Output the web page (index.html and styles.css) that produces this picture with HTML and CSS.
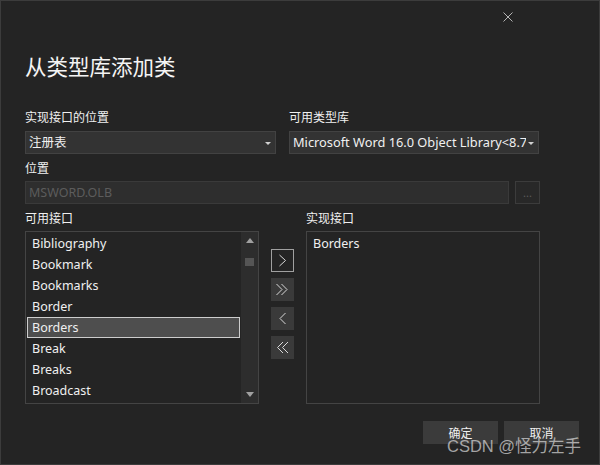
FILE: index.html
```html
<!DOCTYPE html>
<html lang="zh-CN">
<head>
<meta charset="utf-8">
<title>从类型库添加类</title>
<link rel="stylesheet" href="styles.css">
</head>
<body>
<div class="dialog">
  <div class="titlebar">
    <svg class="close" width="10" height="10" viewBox="0 0 10 10"><path d="M0.5 0.5 L9.5 9.5 M9.5 0.5 L0.5 9.5" stroke="#b4b4b4" stroke-width="1" fill="none"/></svg>
  </div>
  <h1 class="title">从类型库添加类</h1>
  <div class="top-grid">
    <div class="field">
      <div class="label">实现接口的位置</div>
      <div class="combo"><span class="combo-text">注册表</span><span class="caret"></span></div>
    </div>
    <div class="field">
      <div class="label">可用类型库</div>
      <div class="combo"><span class="combo-text wide">Microsoft Word 16.0 Object Library&lt;8.7&gt;</span><span class="caret"></span></div>
    </div>
  </div>
  <div class="label label-gap">位置</div>
  <div class="path-row">
    <div class="path-input">MSWORD.OLB</div>
    <div class="browse">...</div>
  </div>
  <div class="lists">
    <div class="list-col">
      <div class="label list-label">可用接口</div>
      <div class="listbox">
        <div class="items">
          <div class="item">Bibliography</div>
          <div class="item">Bookmark</div>
          <div class="item">Bookmarks</div>
          <div class="item">Border</div>
          <div class="item selected">Borders</div>
          <div class="item">Break</div>
          <div class="item">Breaks</div>
          <div class="item">Broadcast</div>
        </div>
        <div class="scrollbar">
          <div class="sb-btn"><span class="tri-up"></span></div>
          <div class="thumb"></div>
          <div class="sb-space"></div>
          <div class="sb-btn"><span class="tri-down"></span></div>
        </div>
      </div>
    </div>
    <div class="move-buttons">
      <div class="move focused"><svg width="21" height="21" viewBox="0 0 21 21"><path d="M7.5 5 L13.5 10.5 L7.5 16" stroke="#d8d8d8" fill="none"/></svg></div>
      <div class="move"><svg width="23" height="23" viewBox="0 0 23 23"><path d="M5.5 6 L11 11.5 L5.5 17 M10.5 6 L16 11.5 L10.5 17" stroke="#d8d8d8" fill="none"/></svg></div>
      <div class="move"><svg width="23" height="23" viewBox="0 0 23 23"><path d="M14.5 6 L9 11.5 L14.5 17" stroke="#d8d8d8" fill="none"/></svg></div>
      <div class="move"><svg width="23" height="23" viewBox="0 0 23 23"><path d="M12 6 L6.5 11.5 L12 17 M17 6 L11.5 11.5 L17 17" stroke="#d8d8d8" fill="none"/></svg></div>
    </div>
    <div class="list-col">
      <div class="label list-label">实现接口</div>
      <div class="listbox">
        <div class="items">
          <div class="item">Borders</div>
        </div>
      </div>
    </div>
  </div>
  <div class="footer">
    <div class="btn">确定</div>
    <div class="btn">取消</div>
  </div>
  <div class="watermark">CSDN @怪力左手</div>
</div>
</body>
</html>
```
FILE: styles.css
```css
html, body {
  margin: 0;
  padding: 0;
  background: #242424;
}
body {
  font-family: "Noto Sans", "Noto Sans CJK SC", sans-serif;
  color: #f0f0f0;
}
.dialog {
  position: relative;
  width: 600px;
  height: 465px;
  box-sizing: border-box;
  border: 1px solid #3c3c3c;
  background: #242424;
  padding-left: 24px;
}
.titlebar {
  height: 49px;
  display: flex;
  justify-content: flex-end;
  align-items: flex-start;
  padding-right: 86px;
  padding-top: 11px;
  box-sizing: border-box;
}
.close {
  display: block;
}
.title {
  margin: 0;
  height: 31px;
  line-height: 32px;
  font-size: 21.5px;
  font-weight: normal;
  font-family: "Noto Sans CJK SC", sans-serif;
  color: #f4f4f4;
}
.top-grid {
  margin-top: 28px;
  display: grid;
  grid-template-columns: 251px 250px;
  column-gap: 13px;
}
.label {
  height: 16px;
  line-height: 16px;
  font-size: 12px;
  font-family: "Noto Sans CJK SC", sans-serif;
  color: #f0f0f0;
  margin-bottom: 6px;
}
.combo {
  height: 23px;
  box-sizing: border-box;
  border: 1px solid #424242;
  background: #333333;
  display: flex;
  align-items: center;
  padding-left: 3px;
}
.combo-text {
  flex: 1;
  min-width: 0;
  overflow: hidden;
  white-space: nowrap;
  font-size: 12.5px;
  line-height: 21px;
  color: #f0f0f0;
}
.combo-text.wide {
  font-size: 12.8px;
}
.caret {
  width: 0;
  height: 0;
  border-left: 3px solid transparent;
  border-right: 3px solid transparent;
  border-top: 3px solid #d0d0d0;
  margin: 1px 4px 0 2px;
}
.label-gap {
  margin-top: 6px;
  margin-bottom: 5px;
}
.path-row {
  display: flex;
  gap: 6px;
  height: 23px;
}
.path-input {
  width: 484px;
  box-sizing: border-box;
  border: 1px solid #3a3a3a;
  background: #2e2e2e;
  color: #5c5c5c;
  font-size: 12.5px;
  line-height: 21px;
  padding-left: 3px;
}
.browse {
  width: 25px;
  box-sizing: border-box;
  border: 1px solid #3c3c3c;
  background: #282828;
  color: #5c5c5c;
  font-size: 11px;
  text-align: center;
  line-height: 21px;
}
.lists {
  margin-top: 6px;
  display: flex;
  column-gap: 12px;
}
.list-col {
  width: 234px;
  display: flex;
  flex-direction: column;
}
.list-label {
  margin-bottom: 5px;
}
.listbox {
  height: 173px;
  box-sizing: border-box;
  border: 1px solid #444444;
  display: flex;
}
.items {
  flex: 1;
  padding: 1px;
}
.item {
  height: 21px;
  box-sizing: border-box;
  border: 1px solid transparent;
  padding: 0 4px;
  font-size: 12.5px;
  line-height: 19px;
  color: #f0f0f0;
  white-space: nowrap;
}
.item.selected {
  background: #4e4e4e;
  border-color: #cdcdcd;
}
.scrollbar {
  width: 17px;
  background: #2d2d2d;
  display: flex;
  flex-direction: column;
  align-items: center;
}
.sb-btn {
  height: 17px;
  width: 17px;
  display: flex;
  align-items: center;
  justify-content: center;
}
.tri-up {
  width: 0;
  height: 0;
  border-left: 4.5px solid transparent;
  border-right: 4.5px solid transparent;
  border-bottom: 5px solid #a0a0a0;
}
.tri-down {
  width: 0;
  height: 0;
  border-left: 4.5px solid transparent;
  border-right: 4.5px solid transparent;
  border-top: 5px solid #a0a0a0;
}
.thumb {
  margin-top: 9px;
  width: 9px;
  height: 8px;
  background: #555555;
}
.sb-space {
  flex: 1;
}
.move-buttons {
  width: 23px;
  padding-top: 39px;
  display: flex;
  flex-direction: column;
  gap: 6px;
}
.move {
  width: 23px;
  height: 23px;
  box-sizing: border-box;
  background: #3a3a3a;
  display: flex;
  align-items: center;
  justify-content: center;
}
.move.focused {
  background: transparent;
  border: 1px solid #a0a0a0;
}
.move svg {
  display: block;
}
.footer {
  margin-top: 17px;
  display: flex;
  justify-content: flex-end;
  gap: 6px;
  padding-right: 20px;
}
.btn {
  width: 75px;
  height: 23px;
  background: #3b3b3b;
  font-size: 12px;
  font-family: "Noto Sans CJK SC", sans-serif;
  line-height: 23px;
  text-align: center;
  color: #f0f0f0;
}
.watermark {
  position: absolute;
  left: 446px;
  top: 434px;
  font-size: 16.5px;
  line-height: 22px;
  font-family: "Liberation Sans", "Noto Sans CJK SC", sans-serif;
  color: rgba(215, 215, 215, 0.72);
  white-space: nowrap;
}
```
